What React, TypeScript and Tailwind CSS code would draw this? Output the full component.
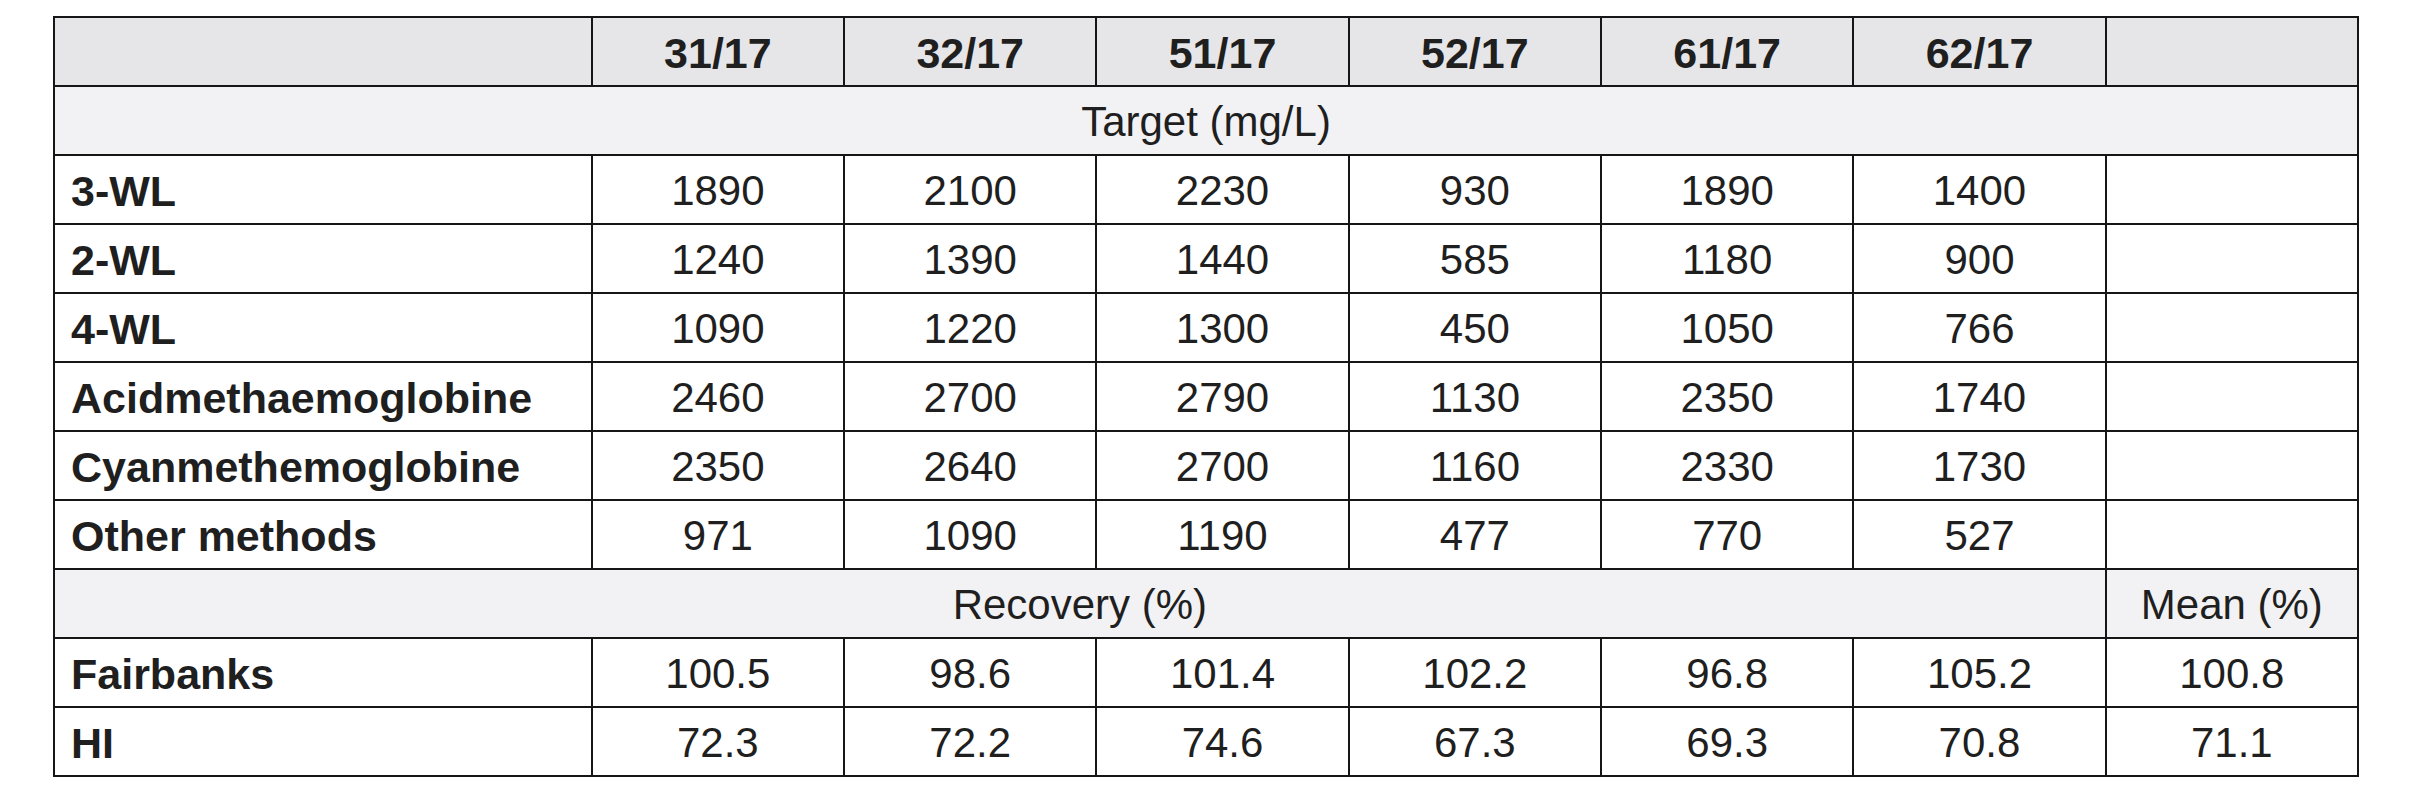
const columns = ["31/17", "32/17", "51/17", "52/17", "61/17", "62/17"];

const targets: [string, string[]][] = [
  ["3-WL", ["1890", "2100", "2230", "930", "1890", "1400"]],
  ["2-WL", ["1240", "1390", "1440", "585", "1180", "900"]],
  ["4-WL", ["1090", "1220", "1300", "450", "1050", "766"]],
  ["Acidmethaemoglobine", ["2460", "2700", "2790", "1130", "2350", "1740"]],
  ["Cyanmethemoglobine", ["2350", "2640", "2700", "1160", "2330", "1730"]],
  ["Other methods", ["971", "1090", "1190", "477", "770", "527"]],
];

const recovery: [string, string[], string][] = [
  ["Fairbanks", ["100.5", "98.6", "101.4", "102.2", "96.8", "105.2"], "100.8"],
  ["HI", ["72.3", "72.2", "74.6", "67.3", "69.3", "70.8"], "71.1"],
];

const cell = "h-[69px] border-2 border-[#161616] p-0 pt-[3px] text-center align-middle";
const label = "h-[69px] border-2 border-[#161616] pl-4 pt-[3px] text-left align-middle text-[43px] font-bold";

export default function App() {
  return (
    <div className="min-h-[800px] bg-white pl-[53px] pt-[16px] font-['Liberation_Sans',Arial,sans-serif] text-[42px] leading-none text-[#1f1f1f]">
      <table className="w-[2306px] table-fixed border-collapse">
        <colgroup>
          <col className="w-[537px]" />
          {[...columns, "mean"].map((c) => (
            <col key={c} className="w-[252px]" />
          ))}
        </colgroup>
        <thead>
          <tr className="bg-[#e6e6e8]">
            <th className={label} />
            {columns.map((c) => (
              <th key={c} className={`${cell} text-[43px] font-bold`}>
                {c}
              </th>
            ))}
            <th className={cell} />
          </tr>
        </thead>
        <tbody>
          <tr className="bg-[#f2f2f4]">
            <td colSpan={8} className={cell}>
              Target (mg/L)
            </td>
          </tr>
          {targets.map(([name, vals]) => (
            <tr key={name}>
              <td className={label}>{name}</td>
              {vals.map((v, i) => (
                <td key={i} className={cell}>
                  {v}
                </td>
              ))}
              <td className={cell} />
            </tr>
          ))}
          <tr className="bg-[#f2f2f4]">
            <td colSpan={7} className={cell}>
              Recovery (%)
            </td>
            <td className={cell}>Mean (%)</td>
          </tr>
          {recovery.map(([name, vals, mean]) => (
            <tr key={name}>
              <td className={label}>{name}</td>
              {vals.map((v, i) => (
                <td key={i} className={cell}>
                  {v}
                </td>
              ))}
              <td className={cell}>{mean}</td>
            </tr>
          ))}
        </tbody>
      </table>
    </div>
  );
}
